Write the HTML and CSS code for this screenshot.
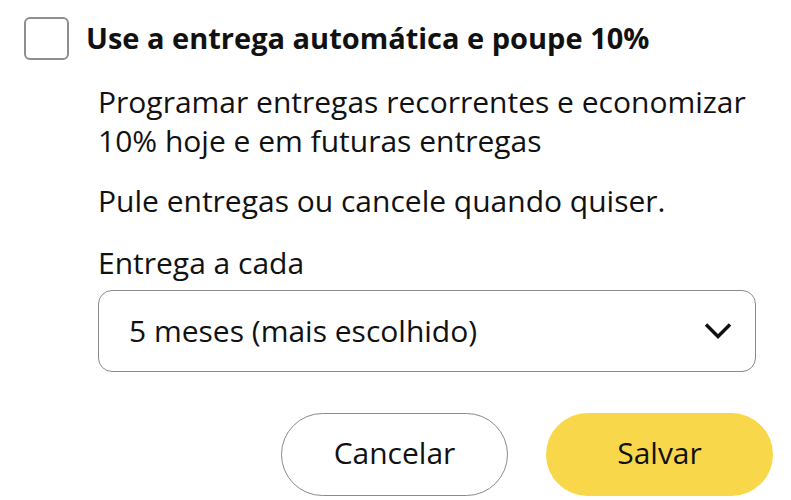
FILE: index.html
```html
<!DOCTYPE html>
<html lang="pt">
<head>
<meta charset="utf-8">
<link rel="stylesheet" href="styles.css">
</head>
<body>
<div class="page">
  <div class="header">
    <span class="checkbox"></span>
    <span class="title">Use a entrega automática e poupe 10%</span>
  </div>
  <div class="content">
    <p class="text p1">Programar entregas recorrentes e economizar 10% hoje e em futuras entregas</p>
    <p class="text p2">Pule entregas ou cancele quando quiser.</p>
    <p class="text label">Entrega a cada</p>
    <div class="select">
      <span class="select-value">5 meses (mais escolhido)</span>
      <svg class="chevron" width="28" height="20" viewBox="0 0 28 20"><path d="M2 3.5 L14 15.5 L26 3.5" fill="none" stroke="#111" stroke-width="3.4"/></svg>
    </div>
  </div>
  <div class="actions">
    <button class="btn btn-cancel">Cancelar</button>
    <button class="btn btn-save">Salvar</button>
  </div>
</div>
</body>
</html>
```

FILE: styles.css
```css
html, body {
  margin: 0;
  padding: 0;
  background: #fff;
}
body {
  font-family: "Open Sans", "Noto Sans", sans-serif;
  color: #111;
}
.page {
  width: 791px;
  height: 500px;
  overflow: hidden;
}
.header {
  display: flex;
  align-items: center;
  gap: 17px;
  padding: 17px 0 0 24px;
  height: 43px;
}
.checkbox {
  width: 41px;
  height: 39px;
  border: 2px solid #8e8e8e;
  border-radius: 6px;
  flex: none;
}
.title {
  font-weight: 700;
  font-size: 29px;
  line-height: 40px;
  margin-bottom: 2px;
}
.content {
  margin-left: 98px;
  width: 658px;
}
.text {
  margin: 0;
  font-size: 30px;
  line-height: 39px;
}
.p1 {
  margin-top: 22px;
  width: 690px;
}
.p2 {
  margin-top: 21px;
}
.label {
  margin-top: 23px;
}
.select {
  margin-top: 8px;
  height: 80px;
  border: 1px solid #8a8a8a;
  border-radius: 14px;
  display: flex;
  align-items: center;
  justify-content: space-between;
  padding: 0 23px 0 30px;
}
.select-value {
  font-size: 30px;
  line-height: 39px;
  margin-top: -2px;
}
.chevron {
  display: block;
}
.actions {
  display: flex;
  justify-content: flex-end;
  gap: 38px;
  padding-right: 18px;
  margin-top: 41px;
}
.btn {
  font-family: inherit;
  font-size: 30px;
  color: #111;
  width: 227px;
  height: 83px;
  border-radius: 42px;
  padding: 0 0 4px;
}
.btn-cancel {
  background: #fff;
  border: 1px solid #8a8a8a;
}
.btn-save {
  background: #f8d84a;
  border: none;
}
```
